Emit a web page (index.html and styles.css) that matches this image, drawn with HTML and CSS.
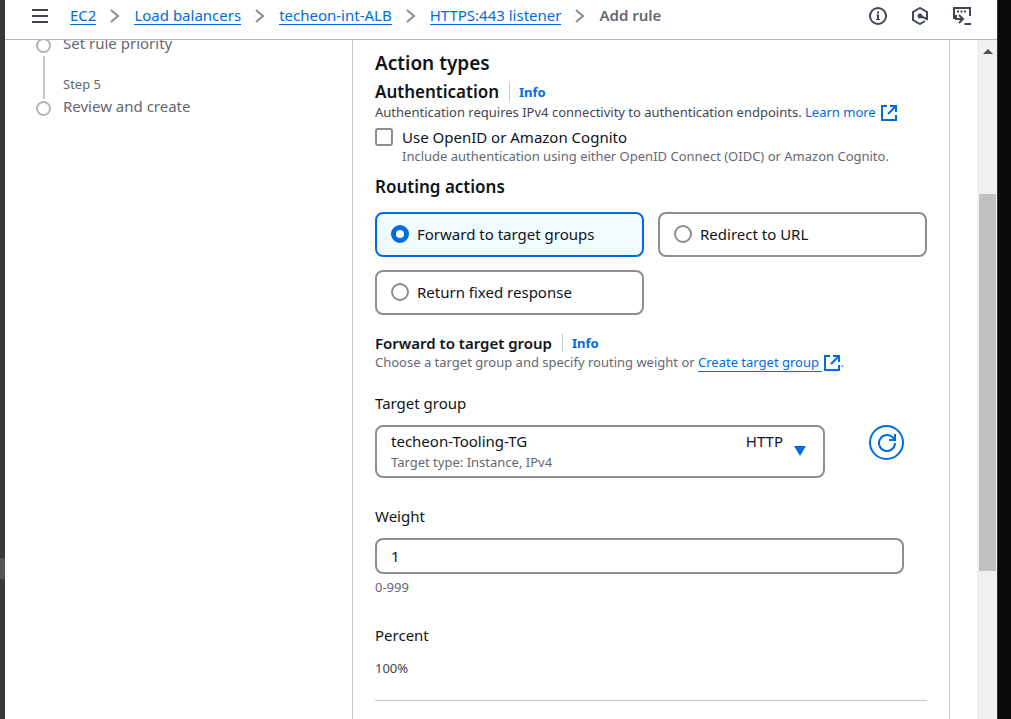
FILE: index.html
```html
<!DOCTYPE html>
<html lang="en">
<head>
<meta charset="utf-8">
<title>Add rule | EC2</title>
<link rel="stylesheet" href="styles.css">
</head>
<body>
<div class="edge-left"><div class="edge-handle"></div></div>
<div class="app">
  <header class="topbar">
    <button class="icon-button menu" type="button" aria-label="Open navigation">
      <svg width="16" height="14" viewBox="0 0 16 14" stroke="#424650" stroke-width="2"><path d="M0 1h16M0 7h16M0 13h16"/></svg>
    </button>
    <nav class="crumbs" aria-label="Breadcrumbs">
      <a href="#">EC2</a>
      <svg class="chevron" width="10" height="14" viewBox="0 0 10 14"><path d="M1 1l7 6-7 6"/></svg>
      <a href="#">Load balancers</a>
      <svg class="chevron" width="10" height="14" viewBox="0 0 10 14"><path d="M1 1l7 6-7 6"/></svg>
      <a href="#">techeon-int-ALB</a>
      <svg class="chevron" width="10" height="14" viewBox="0 0 10 14"><path d="M1 1l7 6-7 6"/></svg>
      <a href="#">HTTPS:443 listener</a>
      <svg class="chevron" width="10" height="14" viewBox="0 0 10 14"><path d="M1 1l7 6-7 6"/></svg>
      <span class="current">Add rule</span>
    </nav>
    <div class="tools">
      <button class="icon-button" type="button" aria-label="Info">
        <svg width="18" height="18" viewBox="0 0 18 18" fill="none" stroke="#424650" stroke-width="2"><circle cx="9" cy="9" r="8"/><path d="M9 7.500V13M9 4.500v2"/><path d="M7.500 8H9M7 12.500h4" stroke-width="1"/></svg>
      </button>
      <button class="icon-button" type="button" aria-label="Diagnostics">
        <svg width="18" height="18" viewBox="0 0 18 18" fill="none" stroke="#424650" stroke-width="2"><path d="M16 11V5L9 1 2 5v8l7 4 5-3"/><path d="M9 9l7 3V9"/><circle cx="9" cy="9" r="1.500" fill="#424650"/></svg>
      </button>
      <button class="icon-button" type="button" aria-label="CloudShell">
        <svg width="18" height="18" viewBox="0 0 18 18" fill="none" stroke="#424650" stroke-width="2"><path d="M3 11H1V1h16v8"/><path d="M4 4.500h9" stroke-dasharray="2 1.500"/><path d="M3 8v4h6M6 8l4 4-4 4M11.500 17H18"/></svg>
      </button>
    </div>
  </header>
  <div class="body">
    <aside class="steps">
      <ol>
        <li><span class="track"><i class="dot"></i><i class="line"></i></span><span>Set rule priority</span></li>
        <li><span class="track"><i class="dot"></i></span><span>Review and create</span></li>
      </ol>
    </aside>
    <main class="panel">
      <h2 class="title">Action types</h2>
      <div class="heading auth"><h3>Authentication</h3><a class="info" href="#">Info</a></div>
      <p class="hint dark">Authentication requires IPv4 connectivity to authentication endpoints. <a href="#">Learn more
        <svg class="ext" width="16" height="16" viewBox="0 0 16 16"><path d="M6 1H1v14h14v-5M9 1h6v6M15 1L7 9"/></svg></a></p>
      <div class="check">
        <input type="checkbox" id="oidc">
        <label for="oidc">Use OpenID or Amazon Cognito</label>
        <p class="hint">Include authentication using either OpenID Connect (OIDC) or Amazon Cognito.</p>
      </div>
      <fieldset>
        <legend>Routing actions</legend>
        <div class="tiles">
          <label class="tile"><input type="radio" name="action" checked>Forward to target groups</label>
          <label class="tile"><input type="radio" name="action">Redirect to URL</label>
          <label class="tile"><input type="radio" name="action">Return fixed response</label>
        </div>
      </fieldset>
      <div class="heading forward"><h4>Forward to target group</h4><a class="info" href="#">Info</a></div>
      <p class="hint">Choose a target group and specify routing weight or <a class="under" href="#">Create target group </a><a href="#" aria-label="Opens in a new tab"><svg class="ext" width="16" height="16" viewBox="0 0 16 16"><path d="M6 1H1v14h14v-5M9 1h6v6M15 1L7 9"/></svg></a>.</p>
      <label class="field-label target" for="tg">Target group</label>
      <div class="target-row">
        <div class="picker">
          <div class="picker-text">
            <select id="tg"><option>techeon-Tooling-TG</option></select>
            <span class="protocol">HTTP</span>
            <span class="hint">Target type: Instance, IPv4</span>
          </div>
          <svg width="12" height="10" viewBox="0 0 12 10"><path d="M0 0h12L6 10z" fill="#006ce0"/></svg>
        </div>
        <button class="refresh" type="button" aria-label="Refresh target groups">
          <svg width="20" height="20" viewBox="0 0 20 20" fill="none" stroke="#006ce0" stroke-width="2"><path d="M18 10a8 8 0 1 1-2-5.300L18 7"/><path d="M18 1v6h-6"/></svg>
        </button>
      </div>
      <label class="field-label weight" for="weight">Weight</label>
      <input class="text" id="weight" type="text" inputmode="numeric" value="1">
      <p class="hint range">0-999</p>
      <label class="field-label percent" for="pct">Percent</label>
      <output class="hint dark value" id="pct">100%</output>
      <hr>
    </main>
    <div class="scrollbar"><svg width="10" height="5" viewBox="0 0 10 5"><path d="M5 0l5 5H0z" fill="#505050"/></svg><div class="thumb"></div></div>
  </div>
</div>
<div class="edge-right"></div>
</body>
</html>
```

FILE: styles.css
```css
* { box-sizing: border-box; }

body {
  margin: 0;
  height: 100vh;
  display: flex;
  overflow: hidden;
  background: #fff;
  color: #0f141a;
  font: 15px/22px "Noto Sans", "Open Sans", sans-serif;
}

h2, h3, h4, p, ol, fieldset, legend { margin: 0; padding: 0; border: 0; }
svg { display: block; flex: none; }
a { color: #006ce0; text-decoration: none; }

.edge-left { width: 5px; background: #383838; padding-top: 558px; }
.edge-handle { height: 21px; background: #555; }
.edge-right { width: 14px; background: #0a0a0a; border-left: 1px solid #333; }

.app { flex: 1; min-width: 0; display: flex; flex-direction: column; }

.topbar {
  flex: none;
  display: flex;
  align-items: center;
  height: 40px;
  padding: 0 26px 8px 27px;
  border-bottom: 1px solid #b4b4bb;
}
.icon-button { padding: 0; border: 0; background: none; }
.crumbs { display: flex; align-items: center; gap: 14px; margin-left: 22px; white-space: nowrap; }
.crumbs a { line-height: 18px; border-bottom: 1px solid #006ce0; }
.chevron { fill: none; stroke: #8c8c94; stroke-width: 2; }
.current { color: #656871; font-weight: 600; line-height: 18px; padding-bottom: 1px; }
.tools { display: flex; gap: 24px; margin-left: auto; }

.body { flex: 1; min-height: 0; display: flex; overflow: hidden; }

.steps { flex: 1; padding-left: 31px; color: #656871; overflow: hidden; }
.steps ol { list-style: none; margin-top: -8px; counter-reset: step 3; }
.steps li { display: grid; grid-template-columns: 15px 1fr; column-gap: 12px; }
.steps li { counter-increment: step; }
.steps li + li::before {
  content: "Step " counter(step);
  grid-column: 2;
  font-size: 13px;
  line-height: 22px;
}
.steps li + li .track { grid-column: 1; }
.steps li:first-child { height: 41px; }
.track { display: flex; flex-direction: column; align-items: center; gap: 3px; padding-top: 6px; }
.dot { flex: none; width: 15px; height: 15px; border: 2px solid #b4b4bb; border-radius: 50%; }
.line { flex: none; width: 2px; height: 43px; background: #c6c6cd; }

.panel {
  width: 598px;
  padding: 9px 22px 0;
  border: solid #c6c6cd;
  border-width: 0 1px;
}
.title { font-size: 19px; line-height: 28px; font-weight: 600; }
.heading { display: flex; align-items: center; }
.auth { margin-top: 3px; }
.auth h3 { font-size: 17px; line-height: 24px; font-weight: 600; }
.forward { margin-top: 17px; }
.forward h4 { font-size: 15px; font-weight: 600; }
.info {
  margin-left: 10px;
  padding-left: 9px;
  border-left: 1px solid #c6c6cd;
  font-size: 13px;
  line-height: 18px;
  font-weight: 700;
}
.hint { color: #656871; font-size: 13px; line-height: 16px; white-space: nowrap; }
.dark { color: #424650; }
.ext {
  display: inline-block;
  margin: -2px 0 -2px 2px;
  vertical-align: -2px;
  fill: none;
  stroke: #006ce0;
  stroke-width: 2;
}
.under { border-bottom: 1px solid #006ce0; white-space: pre; }

.check { display: grid; grid-template-columns: 18px 1fr; column-gap: 9px; align-items: center; margin-top: 6px; }
.check .hint { grid-column: 2; }
input[type="checkbox"], input[type="radio"] {
  appearance: none;
  flex: none;
  width: 18px;
  height: 18px;
  margin: 0;
  border: 2px solid #8c8c94;
  border-radius: 3px;
  background: #fff;
}
input[type="radio"] { border-radius: 50%; }
input[type="radio"]:checked { border: 5px solid #006ce0; }

fieldset { min-width: 0; margin-top: 11px; }
legend { font-size: 17px; line-height: 24px; font-weight: 600; }
.tiles { display: grid; grid-template-columns: 1fr 1fr; gap: 13px 14px; padding-top: 13px; }
.tile {
  display: flex;
  align-items: center;
  gap: 8px;
  height: 45px;
  padding: 0 14px 2px;
  border: 2px solid #8c8c94;
  border-radius: 8px;
}
.tile:has(:checked) { border-color: #006ce0; background: #f0fbff; }

.field-label { display: block; }
.target { margin: 22px 0 11px; }
.weight { margin: 27px 0 11px; }
.percent { margin: 29px 0 14px; }

.target-row { display: flex; align-items: flex-start; gap: 44px; padding-right: 23px; }
.picker {
  flex: 1;
  display: flex;
  align-items: center;
  gap: 11px;
  height: 53px;
  padding: 0 17px 2px 14px;
  border: 2px solid #8c8c94;
  border-radius: 8px;
}
.picker-text { flex: 1; display: grid; grid-template-columns: 1fr auto; line-height: 22px; }
.picker-text .hint { line-height: 20px; }
select {
  appearance: none;
  padding: 0;
  border: 0;
  background: none;
  color: inherit;
  font: inherit;
}
.refresh {
  display: grid;
  place-items: center;
  width: 35px;
  height: 35px;
  padding: 0;
  border: 2px solid #006ce0;
  border-radius: 50%;
  background: #fff;
}
.text {
  display: block;
  width: calc(100% - 23px);
  height: 36px;
  padding: 0 14px;
  border: 2px solid #8c8c94;
  border-radius: 8px;
  color: inherit;
  font: inherit;
}
.range { margin-top: 5px; }
.value { display: block; }
hr { margin: 24px 0 0; border: 0; border-top: 1px solid #c6c6cd; }

.scrollbar {
  width: 20px;
  margin-left: 27px;
  padding: 9px 1px 0 2px;
  background: #f0f0f0;
}
.scrollbar svg { margin: 0 auto; }
.thumb { height: 377px; margin-top: 140px; background: #c1c1c1; }
```
